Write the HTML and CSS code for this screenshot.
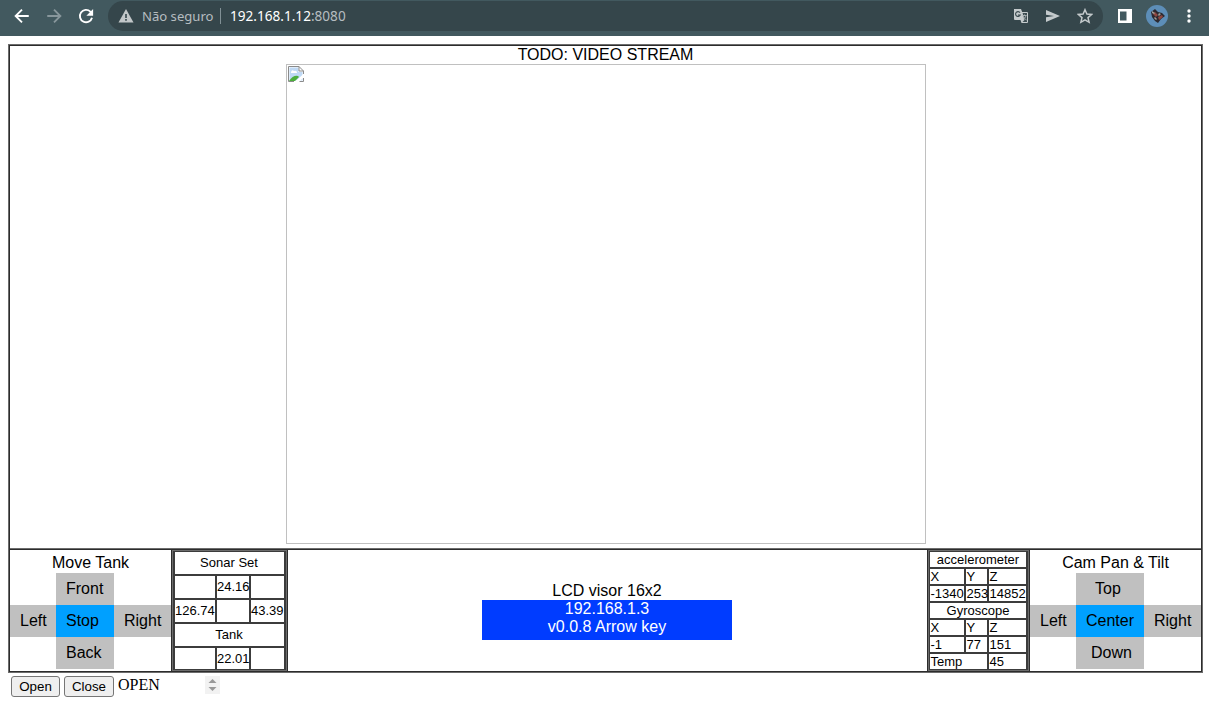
FILE: index.html
```html
<!DOCTYPE html>
<html lang="pt">
<head>
<meta charset="utf-8">
<title>Tank</title>
<link rel="stylesheet" href="styles.css">
</head>
<body>
<header class="bar">
  <svg class="nav" viewBox="0 0 24 24"><path d="M21 12H4M12 3.500L3.500 12l8.500 8.500"/></svg>
  <svg class="nav dim" viewBox="0 0 24 24"><path d="M3 12h17M12 3.500l8.500 8.500-8.500 8.500"/></svg>
  <svg class="nav" viewBox="0 0 24 24"><path d="M20 14.200A8.200 8.200 0 1 1 17.800 6.200L19.500 8"/><path class="solid" d="M21.500 2.500v9h-9z"/></svg>
  <div class="address">
    <svg class="warn" viewBox="0 0 16 14"><path d="M8 0l7.500 13.500H.5z"/><path class="mark" d="M7.200 5h1.600v4H7.200zM7.200 10h1.600v1.700H7.200z"/></svg>
    <span class="insecure">Não seguro</span>
    <span class="url"><b>192.168.1.12</b>:8080</span>
    <svg class="act translate" viewBox="0 0 16 16"><path d="M1 1h7l1.200 3H14a1 1 0 0 1 1 1v9a1 1 0 0 1-1 1H8.500L7.500 12H2a1 1 0 0 1-1-1z"/><path class="page" d="M9.600 5H14v9H9.500l2-2z"/><path class="glyph" d="M7 4.700A2.400 2.400 0 1 0 7.200 7H5"/><path class="line" d="M9.500 7.500h4M11.500 6.500v1M13 7.500c-.5 2-1.500 3-2.500 3.500M10.500 8.500c.6 1.500 1.500 2.500 3 3.500"/></svg>
    <svg class="act" viewBox="0 0 16 16"><path d="M1 2l14 6L1 14V9.300L9 8 1 6.700z"/></svg>
    <svg class="act star" viewBox="0 0 16 16"><path d="M8 1.700l1.900 4.400 4.700.4-3.600 3.100 1.100 4.700L8 11.800l-4.100 2.500L5 9.600 1.400 6.500l4.700-.4z"/></svg>
  </div>
  <svg class="panel" viewBox="0 0 14 14"><path fill-rule="evenodd" d="M0 0h14v14H0zM2 2.500v9h6.500v-9z"/></svg>
  <svg class="avatar" viewBox="0 0 22 22"><circle cx="11" cy="11" r="11" fill="#5d8eb8"/><path fill="#2c2930" d="M5 7l4-3 3 3 4 1 3 3-4 3-3 4-3-2-3-4z"/><path fill="#8e4740" d="M9 7l3 3-2 2-3-3zM12 12l4-2 1 2-4 3z"/><path fill="#a0a099" d="M6 6l3 2-1 1-2-1zM13 8l2 1-2 2-1-1zM9 12l2 2-1 1-2-2z"/></svg>
  <svg class="dots" viewBox="0 0 4 14"><circle cx="2" cy="2" r="1.700"/><circle cx="2" cy="7" r="1.700"/><circle cx="2" cy="12" r="1.700"/></svg>
</header>

<main class="console">
  <section class="video">
    <div class="heading">TODO: VIDEO STREAM</div>
    <div class="stream">
      <svg class="broken" viewBox="0 0 16 16"><path fill="#fff" d="M.5.500H11L15.500 5v10.500H.5z"/><path fill="#bfd9f5" d="M1.500 1.500h9V6h4v8.500h-13z"/><path fill="#fff" d="M3 6q1-3 3-1 3-1 3 2H3z"/><path fill="#4cae3c" d="M1 15q4-6 9-5l1 1-4 4z"/><path fill="#fff" d="M6.500 16L16 7.500V11l-5 5z"/><path fill="none" stroke="#8b8b8b" d="M15.500 8V5L11 .5H.5v15H6M11 .5V5h4.500M11.500 15.500h4V12"/></svg>
    </div>
  </section>
  <section class="controls">
    <div class="pad tank">
      <div class="title">Move Tank</div>
      <div class="key up">Front</div>
      <div class="key left">Left</div><div class="key mid">Stop</div><div class="key right">Right</div>
      <div class="key down">Back</div>
    </div>
    <div class="sonar readout">
      <div class="wide">Sonar Set</div>
      <div></div><div>24.16</div><div></div>
      <div>126.74</div><div></div><div>43.39</div>
      <div class="wide">Tank</div>
      <div></div><div>22.01</div><div></div>
    </div>
    <div class="visor">
      <div>LCD visor 16x2</div>
      <div class="lcd">192.168.1.3<br>v0.0.8 Arrow key</div>
    </div>
    <div class="motion readout">
      <div class="wide">accelerometer</div>
      <div>X</div><div>Y</div><div>Z</div>
      <div>-1340</div><div>253</div><div>14852</div>
      <div class="wide">Gyroscope</div>
      <div>X</div><div>Y</div><div>Z</div>
      <div>-1</div><div>77</div><div>151</div>
      <div class="two">Temp</div><div>45</div>
    </div>
    <div class="pad cam">
      <div class="title">Cam Pan &amp; Tilt</div>
      <div class="key up">Top</div>
      <div class="key left">Left</div><div class="key mid">Center</div><div class="key right">Right</div>
      <div class="key down">Down</div>
    </div>
  </section>
</main>

<footer class="foot">
  <button class="btn open">Open</button><button class="btn close">Close</button>
  <span class="state">OPEN</span>
  <svg class="spin" viewBox="0 0 15 18"><path d="M3.500 7L7.500 3l4 4zM3.500 11l4 4 4-4z"/></svg>
</footer>
</body>
</html>
```
FILE: styles.css
```css
* { box-sizing: border-box; }
body { margin: 0; width: 1209px; height: 706px; overflow: hidden; background: #fff; color: #000; font: 16px/18px "Liberation Sans", Arial, sans-serif; }
svg { display: block; flex: none; }

.bar { display: flex; align-items: center; height: 36px; padding: 0 0 4px 13px; background: #42595f; font-family: "Noto Sans", sans-serif; font-size: 14px; }
.nav { width: 18px; height: 18px; margin-right: 14px; fill: none; stroke: #fff; stroke-width: 2.500; }
.nav .solid { fill: #fff; stroke: none; }
.nav.dim { stroke: #88979c; }
.address { display: flex; align-items: center; width: 995px; height: 30px; margin-left: -1px; padding: 0 10px; border-radius: 15px; background: #35464b; color: #b5bdc0; }
.warn { width: 16px; height: 14px; fill: #c2c7c9; }
.warn .mark { fill: #35464b; }
.insecure { width: 79px; margin-left: 8px; border-right: 1px solid #819095; line-height: 16px; white-space: nowrap; font-size: 13.100px; }
.url { margin-left: 9px; margin-right: auto; font-size: 13.600px; }
.url b { color: #fff; font-weight: 400; }
.act { width: 16px; height: 16px; margin-left: 16px; fill: #c4cacc; }
.act .page { fill: #3d4d52; }
.act .line { fill: none; stroke: #a5aeb1; }
.act .glyph { fill: none; stroke: #3d4d52; stroke-width: 1.200; }
.star { fill: none; stroke: #c4cacc; stroke-width: 1.500; }
.panel { width: 14px; height: 14px; margin-left: 15px; fill: #fff; }
.avatar { width: 22px; height: 22px; margin-left: 14px; }
.dots { width: 4px; height: 14px; margin-left: 19px; fill: #fff; }

/* Table rules are two-tone: a grey outer line and a dark inner one. */
.console { width: 1193px; height: 627px; margin: 9px 0 0 9px; border: 1px solid #2c2c2c; box-shadow: 0 0 0 1px #6c6c6c; }
.video { height: 502px; padding-left: 1px; text-align: center; }
.heading { padding-right: 1px; }
.stream { width: 640px; height: 480px; margin: 0 auto; padding: 1px; border: 1px solid #c0c0c0; }
.broken { width: 16px; height: 16px; }
.controls { display: grid; grid-template-columns: 161px 117px 639px 103px 171px; height: 123px; border-top: 1px solid #6c6c6c; }
.controls > div { border-top: 1px solid #2c2c2c; }

.pad { display: grid; grid-template-rows: 23px 32px 32px 32px; line-height: 32px; }
.tank { grid-template-columns: 46px 58px 57px; }
.cam { grid-template-columns: 46px 68px 57px; }
.title { grid-column: 1 / 4; line-height: 25px; text-align: center; }
.key { padding-left: 10px; background: #c0c0c0; }
.up, .down { grid-column: 2; }
.left { grid-column: 1; }
.mid { background: #00a0ff; }
.cam .up { padding-left: 19px; }
.cam .down { padding-left: 15px; }

.readout { display: grid; gap: 2px; height: 122px; padding: 2px; border: solid #2c2c2c; border-width: 1px 1px 0; box-shadow: inset 0 0 0 1px #6c6c6c; background: #3c3c3c; font-size: 13px; line-height: 15px; }
.readout div { background: #fff; white-space: nowrap; }
.readout .wide { grid-column: 1 / 4; text-align: center; }
.readout .two { grid-column: 1 / 3; }
.sonar { padding-left: 3px; padding-right: 3px; grid-template-columns: 40px 32px 1fr; grid-template-rows: 22px 22px 22px 22px 21px; }
.sonar div { line-height: 22px; }
.sonar .wide { padding-right: 1px; }
.motion { padding-right: 3px; grid-template-columns: 34px 21px 1fr; grid-template-rows: repeat(7, 15px); }
.motion div:not(.wide) { text-indent: .5px; }

.visor { padding: 32px 1px 0 0; text-align: center; }
.lcd { width: 250px; height: 40px; margin: 0 auto; background: #003cff; color: #fff; }

.foot { display: flex; padding: 4px 0 0 11px; }
.btn { height: 21px; margin: 0 4px 0 0; padding: 0; border: 1px solid #767676; border-radius: 3px; background: #efefef; color: #000; font: 13.333px "Liberation Sans", sans-serif; }
.open { width: 49px; }
.close { width: 50px; }
.state { width: 87px; font: 16px/18px "Liberation Serif", serif; }
.spin { width: 15px; height: 18px; fill: #999; background: #f2f2f2; }
```
